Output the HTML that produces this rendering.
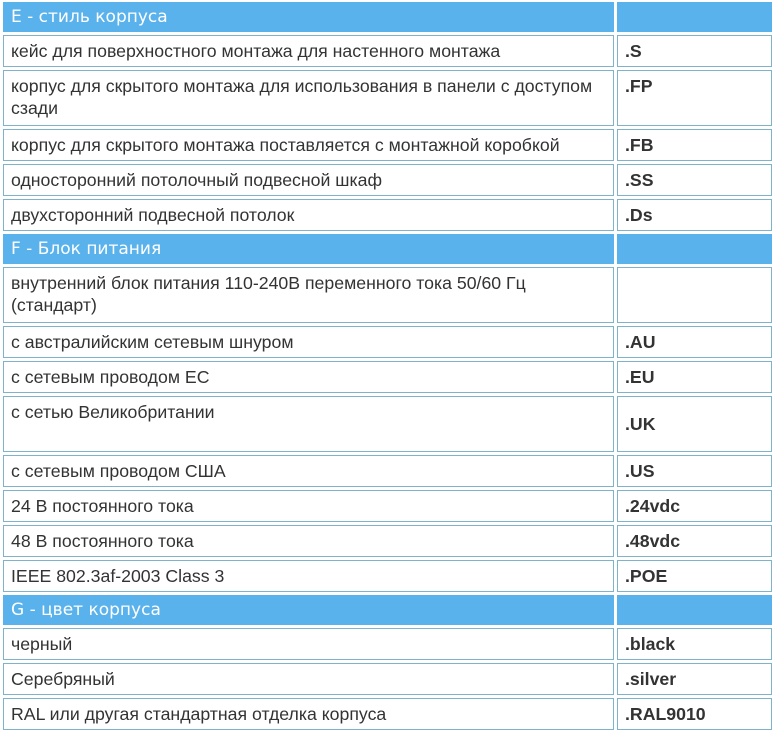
<html><head><style>
body{margin:0;background:#fff;}
table{position:absolute;left:0;top:-1px;border-collapse:separate;border-spacing:3px;width:775px;font-family:"Liberation Sans",sans-serif;font-size:17.7px;color:#333;table-layout:fixed;}
td{border:1px solid #7fb3c9;padding:4px 7px;vertical-align:top;line-height:22px;white-space:nowrap;overflow:hidden;}
td.r{font-weight:bold;}
tr.h td{background:#5ab2ec;border-color:#5ab2ec;color:#fff;font-family:"DejaVu Sans",sans-serif;font-size:17px;padding:2px 7px;height:29px;line-height:24px;}
tr.n td{height:32px;}
tr.t td{height:56px;}
</style></head><body>
<table>
<col style="width:611px"><col>
<tr class="h"><td>E - стиль корпуса</td><td></td></tr>
<tr class="n"><td>кейс для поверхностного монтажа для настенного монтажа</td><td class="r">.S</td></tr>
<tr class="t"><td>корпус для скрытого монтажа для использования в панели с доступом<br>сзади</td><td class="r">.FP</td></tr>
<tr class="n"><td>корпус для скрытого монтажа поставляется с монтажной коробкой</td><td class="r">.FB</td></tr>
<tr class="n"><td>односторонний потолочный подвесной шкаф</td><td class="r">.SS</td></tr>
<tr class="n"><td>двухсторонний подвесной потолок</td><td class="r">.Ds</td></tr>
<tr class="h"><td>F - Блок питания</td><td></td></tr>
<tr class="t"><td>внутренний блок питания 110-240В переменного тока 50/60 Гц<br>(стандарт)</td><td class="r"></td></tr>
<tr class="n"><td>с австралийским сетевым шнуром</td><td class="r">.AU</td></tr>
<tr class="n"><td>с сетевым проводом ЕС</td><td class="r">.EU</td></tr>
<tr class="t"><td>с сетью Великобритании</td><td class="r" style="vertical-align:middle">.UK</td></tr>
<tr class="n"><td>с сетевым проводом США</td><td class="r">.US</td></tr>
<tr class="n"><td>24 В постоянного тока</td><td class="r">.24vdc</td></tr>
<tr class="n"><td>48 В постоянного тока</td><td class="r">.48vdc</td></tr>
<tr class="n"><td>IEEE 802.3af-2003 Class 3</td><td class="r">.POE</td></tr>
<tr class="h"><td>G - цвет корпуса</td><td></td></tr>
<tr class="n"><td>черный</td><td class="r">.black</td></tr>
<tr class="n"><td>Серебряный</td><td class="r">.silver</td></tr>
<tr class="n"><td>RAL или другая стандартная отделка корпуса</td><td class="r">.RAL9010</td></tr>
</table>
</body></html>
